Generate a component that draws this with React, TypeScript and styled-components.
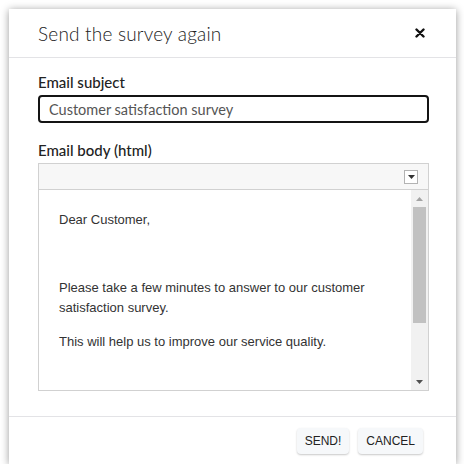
import React from 'react';
import styled, { createGlobalStyle } from 'styled-components';

const GlobalStyle = createGlobalStyle`
  html, body {
    margin: 0;
    padding: 0;
    background: #ffffff;
  }
  * { box-sizing: border-box; }
`;

const bodyParagraphs = [
  'Dear Customer,',
  '',
  'Please take a few minutes to answer to our customer satisfaction survey.',
  'This will help us to improve our service quality.',
];

export default function App() {
  return (
    <>
      <GlobalStyle />
      <Dialog>
        <Header>
          <Title>Send the survey again</Title>
          <CloseButton aria-label="close">
            <svg width="10" height="10" viewBox="0 0 10 10">
              <path d="M1.5 1.5 L8.5 8.5 M8.5 1.5 L1.5 8.5" stroke="#111" strokeWidth="2.4" strokeLinecap="round" />
            </svg>
          </CloseButton>
        </Header>

        <Body>
          <Label>Email subject</Label>
          <SubjectInput defaultValue="Customer satisfaction survey" />

          <Label $spaced>Email body (html)</Label>
          <Editor>
            <Toolbar>
              <ToolbarDrop>
                <svg width="7" height="4" viewBox="0 0 7 4">
                  <path d="M0 0 L7 0 L3.5 4 Z" fill="#333" />
                </svg>
              </ToolbarDrop>
            </Toolbar>
            <EditorArea>
              <EditorContent>
                {bodyParagraphs.map((text, i) => (
                  <Paragraph key={i}>{text || '\u00a0'}</Paragraph>
                ))}
              </EditorContent>
              <Scrollbar>
                <ScrollArrow>
                  <svg width="7" height="4" viewBox="0 0 7 4">
                    <path d="M0 4 L7 4 L3.5 0 Z" fill="#a3a3a3" />
                  </svg>
                </ScrollArrow>
                <ScrollTrack>
                  <ScrollThumb />
                </ScrollTrack>
                <ScrollArrow>
                  <svg width="7" height="4" viewBox="0 0 7 4">
                    <path d="M0 0 L7 0 L3.5 4 Z" fill="#505050" />
                  </svg>
                </ScrollArrow>
              </Scrollbar>
            </EditorArea>
          </Editor>
        </Body>

        <Footer>
          <FooterButton>SEND!</FooterButton>
          <FooterButton>CANCEL</FooterButton>
        </Footer>
      </Dialog>
    </>
  );
}

const Dialog = styled.div`
  margin: 9px 8px 0 9px;
  width: 447px;
  height: 455px;
  background: #ffffff;
  box-shadow: 0 1px 8px rgba(0, 0, 0, 0.4);
  display: flex;
  flex-direction: column;
`;

const Header = styled.div`
  height: 49px;
  padding: 0 30px 0 29px;
  border-bottom: 1px solid #e3e3e6;
  display: flex;
  align-items: center;
  justify-content: space-between;
`;

const Title = styled.h2`
  margin: 0;
  font-family: Lato, "Open Sans", sans-serif;
  font-weight: 300;
  font-size: 19px;
  letter-spacing: 0.2px;
  color: #222;
`;

const CloseButton = styled.button`
  border: none;
  background: none;
  padding: 0;
  width: 12px;
  height: 12px;
  display: flex;
  align-items: center;
  justify-content: center;
  cursor: pointer;
`;

const Body = styled.div`
  flex: 1;
  padding: 16px 27px 0 29px;
  display: flex;
  flex-direction: column;
`;

const Label = styled.label<{ $spaced?: boolean }>`
  display: block;
  margin-top: ${(p) => (p.$spaced ? '19px' : '0')};
  margin-bottom: 4px;
  font-family: Lato, "Open Sans", sans-serif;
  font-weight: 500;
  font-size: 15px;
  line-height: 17px;
  color: #222;
`;

const SubjectInput = styled.input`
  width: 391px;
  height: 28px;
  border: 2px solid #141414;
  border-radius: 4px;
  padding: 0 9px;
  font-family: Lato, "Open Sans", sans-serif;
  font-weight: 400;
  font-size: 14.5px;
  color: #555;
  outline: none;
`;

const Editor = styled.div`
  width: 391px;
  height: 228px;
  border: 1px solid #d1d1d1;
  display: flex;
  flex-direction: column;
`;

const Toolbar = styled.div`
  height: 26px;
  background: #f7f7f7;
  border-bottom: 1px solid #d1d1d1;
  display: flex;
  align-items: center;
  justify-content: flex-end;
  padding-right: 10px;
`;

const ToolbarDrop = styled.div`
  width: 14px;
  height: 14px;
  border: 1px solid #b3b3b3;
  background: #ffffff;
  display: flex;
  align-items: center;
  justify-content: center;
`;

const EditorArea = styled.div`
  flex: 1;
  display: flex;
  overflow: hidden;
`;

const EditorContent = styled.div`
  flex: 1;
  padding: 20px 20px 0 20px;
  font-family: "Liberation Sans", Arial, sans-serif;
  font-size: 13px;
  line-height: 20px;
  color: #333;
`;

const Paragraph = styled.p`
  margin: 0 0 14px 0;
`;

const Scrollbar = styled.div`
  width: 17px;
  background: #f1f1f1;
  display: flex;
  flex-direction: column;
`;

const ScrollArrow = styled.div`
  height: 17px;
  display: flex;
  align-items: center;
  justify-content: center;
`;

const ScrollTrack = styled.div`
  flex: 1;
  padding: 0 2px;
`;

const ScrollThumb = styled.div`
  height: 116px;
  background: #c1c1c1;
`;

const Footer = styled.div`
  height: 48px;
  border-top: 1px solid #e3e3e6;
  display: flex;
  align-items: center;
  justify-content: flex-end;
  gap: 9px;
  padding: 0 33px 0 0;
`;

const FooterButton = styled.button`
  height: 26px;
  padding: 0 8px;
  border: none;
  border-radius: 4px;
  background: #f6f8fa;
  box-shadow: 0 1px 2px rgba(0, 0, 0, 0.22);
  font-family: "Liberation Sans", Arial, sans-serif;
  font-size: 12px;
  color: #222;
  cursor: pointer;
`;
